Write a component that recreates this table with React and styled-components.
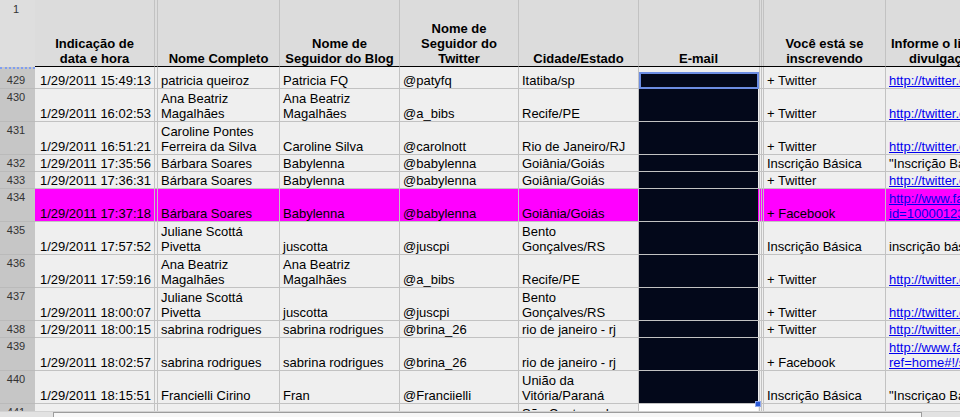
import styled, { createGlobalStyle } from 'styled-components';

const GlobalStyle = createGlobalStyle`
  html, body {
    margin: 0;
    padding: 0;
    overflow: hidden;
    background: #efefef;
  }
  body {
    font-family: "Liberation Sans", Arial, sans-serif;
  }
`;

const LINE = '#c2c2c2';
const CELL_BG = '#efefef';
const HEAD_BG = '#dcdcdc';
const MAIL_BG = '#03081a';
const PINK = '#ff00ff';

// column widths include their right grid line
const COLS = [
  { w: 119, align: 'right', line: false },
  { w: 122 },
  { w: 120 },
  { w: 119 },
  { w: 120 },
  { w: 119, line: false, mail: true },
  { w: 122 },
  { w: 114, line: false },
];

const HEADERS = [
  'Indicação de\ndata e hora',
  'Nome Completo',
  'Nome de\nSeguidor do Blog',
  'Nome de\nSeguidor do\nTwitter',
  'Cidade/Estado',
  'E-mail',
  'Você está se\ninscrevendo',
  'Informe o link da\ndivulgação',
];

const tw = (u) => ({ link: true, text: `http://twitter.com/${u}` });

const ROWS = [
  { num: 429, h: 17, selected: true, cells: ['1/29/2011 15:49:13', 'patricia queiroz', 'Patricia FQ', '@patyfq', 'Itatiba/sp', '', '+ Twitter', tw('patyfq')] },
  { num: 430, h: 33, cells: ['1/29/2011 16:02:53', 'Ana Beatriz\nMagalhães', 'Ana Beatriz\nMagalhães', '@a_bibs', 'Recife/PE', '', '+ Twitter', tw('a_bibs')] },
  { num: 431, h: 33, cells: ['1/29/2011 16:51:21', 'Caroline Pontes\nFerreira da Silva', 'Caroline Silva', '@carolnott', 'Rio de Janeiro/RJ', '', '+ Twitter', tw('carolnott')] },
  { num: 432, h: 17, cells: ['1/29/2011 17:35:56', 'Bárbara Soares', 'Babylenna', '@babylenna', 'Goiânia/Goiás', '', 'Inscrição Básica', '"Inscrição Básica"'] },
  { num: 433, h: 17, cells: ['1/29/2011 17:36:31', 'Bárbara Soares', 'Babylenna', '@babylenna', 'Goiânia/Goiás', '', '+ Twitter', tw('babylenna')] },
  { num: 434, h: 33, bg: PINK, cells: ['1/29/2011 17:37:18', 'Bárbara Soares', 'Babylenna', '@babylenna', 'Goiânia/Goiás', '', '+ Facebook', { link: true, text: 'http://www.facebook.com/profile.php?\nid=100001234567890' }] },
  { num: 435, h: 33, cells: ['1/29/2011 17:57:52', 'Juliane Scottá\nPivetta', 'juscotta', '@juscpi', 'Bento\nGonçalves/RS', '', 'Inscrição Básica', 'inscrição básica'] },
  { num: 436, h: 33, cells: ['1/29/2011 17:59:16', 'Ana Beatriz\nMagalhães', 'Ana Beatriz\nMagalhães', '@a_bibs', 'Recife/PE', '', '+ Twitter', tw('a_bibs')] },
  { num: 437, h: 33, cells: ['1/29/2011 18:00:07', 'Juliane Scottá\nPivetta', 'juscotta', '@juscpi', 'Bento\nGonçalves/RS', '', '+ Twitter', tw('juscpi')] },
  { num: 438, h: 17, cells: ['1/29/2011 18:00:15', 'sabrina rodrigues', 'sabrina rodrigues', '@brina_26', 'rio de janeiro - rj', '', '+ Twitter', tw('brina_26')] },
  { num: 439, h: 33, cells: ['1/29/2011 18:02:57', 'sabrina rodrigues', 'sabrina rodrigues', '@brina_26', 'rio de janeiro - rj', '', '+ Facebook', { link: true, text: 'http://www.facebook.com/?\nref=home#!/sabrina' }] },
  { num: 440, h: 33, handle: true, cells: ['1/29/2011 18:15:51', 'Francielli Cirino', 'Fran', '@Franciielli', 'União da\nVitória/Paraná', '', 'Inscrição Básica', '"Inscriçao Básica"'] },
  { num: 441, h: 33, lastMail: true, cells: ['1/29/2011 18:20:04', 'Amanda Lima', 'Amanda', '@amandinha', 'São Caetano do\nSul/SP', '', '+ Twitter', tw('amandinha')] },
];

export default function App() {
  return (
    <>
      <GlobalStyle />
      <Page>
        <Grid>
          <Row $h={67}>
            <HeadNum>1</HeadNum>
            {COLS.map((c, i) => (
              <Frag key={i} col={c} i={i} bg={HEAD_BG} head>
                <HeadCell $w={c.w} $line={c.line !== false}>
                  <Text>{HEADERS[i]}</Text>
                </HeadCell>
              </Frag>
            ))}
          </Row>

          {/* frozen pane gap */}
          <Row $h={5}>
            <GapNum />
            {COLS.map((c, i) => (
              <Frag key={i} col={c} i={i} bg={CELL_BG} gap>
                <GapCell $w={c.w} $line={c.line !== false} />
              </Frag>
            ))}
          </Row>

          {ROWS.map((r) => (
            <Row key={r.num} $h={r.h}>
              <RowNum>{r.num}</RowNum>
              {COLS.map((c, i) => {
                const bg = c.mail ? (r.lastMail ? '#ffffff' : MAIL_BG) : r.bg || CELL_BG;
                const v = r.cells[i];
                return (
                  <Frag key={i} col={c} i={i} bg={r.bg || CELL_BG}>
                    <Cell $w={c.w} $align={c.align} $line={c.line !== false} $bg={bg} $mail={c.mail}>
                      {typeof v === 'object' ? <Link>{v.text}</Link> : <Text>{v}</Text>}
                      {c.mail && r.selected && <Selection />}
                      {c.mail && r.handle && <Handle />}
                    </Cell>
                  </Frag>
                );
              })}
            </Row>
          ))}
        </Grid>
        <ScrollBar>
          <ScrollThumb />
        </ScrollBar>
      </Page>
    </>
  );
}

// a cell followed by the frozen-column split where one sits
function Frag({ col, i, bg, head, gap, children }) {
  return (
    <>
      {children}
      {i === 0 && <Split $bg={bg} $head={head} $gap={gap} />}
      {col.mail && <Split3 $bg={bg} $head={head} $gap={gap} />}
    </>
  );
}

const Page = styled.div`
  height: 417px;
  overflow: hidden;
  display: flex;
  flex-direction: column;
`;

const Grid = styled.div`
  height: 411px;
  flex: 0 0 411px;
  overflow: hidden;
`;

const Row = styled.div`
  display: flex;
  height: ${(p) => p.$h}px;
  width: 1000px;
`;

const RowNum = styled.div`
  box-sizing: border-box;
  flex: 0 0 35px;
  height: 100%;
  padding: 2px 3px 0 0;
  background: #c6c6c6;
  border-bottom: 1px solid #bababa;
  color: #333;
  font-size: 11px;
  line-height: 13px;
  text-align: center;
`;

const HeadNum = styled(RowNum)`
  padding-top: 3px;
  background: #dedede;
  border-bottom: none;
`;

const GapNum = styled(RowNum)`
  border-bottom: none;
  border-top: 2px dotted #7f9ef2;
`;

const Cell = styled.div`
  box-sizing: border-box;
  position: relative;
  flex: 0 0 ${(p) => p.$w}px;
  height: 100%;
  display: flex;
  flex-direction: column;
  justify-content: flex-end;
  padding: 0 3px;
  overflow: ${(p) => (p.$mail ? 'visible' : 'hidden')};
  text-align: ${(p) => p.$align || 'left'};
  background: ${(p) => p.$bg};
  border-right: ${(p) => (p.$line ? `1px solid ${LINE}` : 'none')};
  border-bottom: 1px solid ${LINE};
  color: #000;
  font-size: 13px;
  line-height: 15px;
`;

const HeadCell = styled(Cell)`
  background: ${HEAD_BG};
  border-bottom: 1px solid #000;
  font-weight: bold;
  text-align: center;
`;

const GapCell = styled(Cell)`
  background: ${CELL_BG};
  border-bottom: none;
`;

const Text = styled.div`
  flex: none;
  white-space: pre;
`;

const Link = styled(Text)`
  color: #0000ee;
  text-decoration: underline;
`;

const Split = styled.div`
  box-sizing: border-box;
  flex: 0 0 4px;
  height: 100%;
  background: ${(p) => p.$bg};
  border-left: 1px solid ${LINE};
  border-right: 1px solid ${LINE};
  border-bottom: ${(p) => (p.$gap ? 'none' : `1px solid ${p.$head ? '#000' : LINE}`)};
`;

const Split3 = styled.div`
  box-sizing: border-box;
  flex: 0 0 6px;
  height: 100%;
  background: repeating-linear-gradient(90deg, ${(p) => p.$bg} 0 1px, ${LINE} 1px 2px);
  border-bottom: ${(p) => (p.$gap ? 'none' : `1px solid ${p.$head ? '#000' : LINE}`)};
`;

const Selection = styled.div`
  position: absolute;
  top: 0;
  left: 0;
  right: -1px;
  bottom: -1px;
  border: 2px solid #6c8de3;
  z-index: 2;
`;

const Handle = styled.div`
  position: absolute;
  right: -3px;
  bottom: -4px;
  width: 6px;
  height: 6px;
  box-sizing: border-box;
  background: #2a5ad8;
  border: 1px solid #8fa8ee;
  z-index: 3;
`;

const ScrollBar = styled.div`
  flex: 0 0 6px;
  display: flex;
  box-sizing: border-box;
  border-top: 1px solid #d2d2d2;
  background: #e2e2e2;
`;

const ScrollThumb = styled.div`
  margin-left: 53px;
  width: 869px;
  box-sizing: border-box;
  border: 1px solid #9c9c9c;
  border-bottom: none;
  background: #f7f7f7;
`;
